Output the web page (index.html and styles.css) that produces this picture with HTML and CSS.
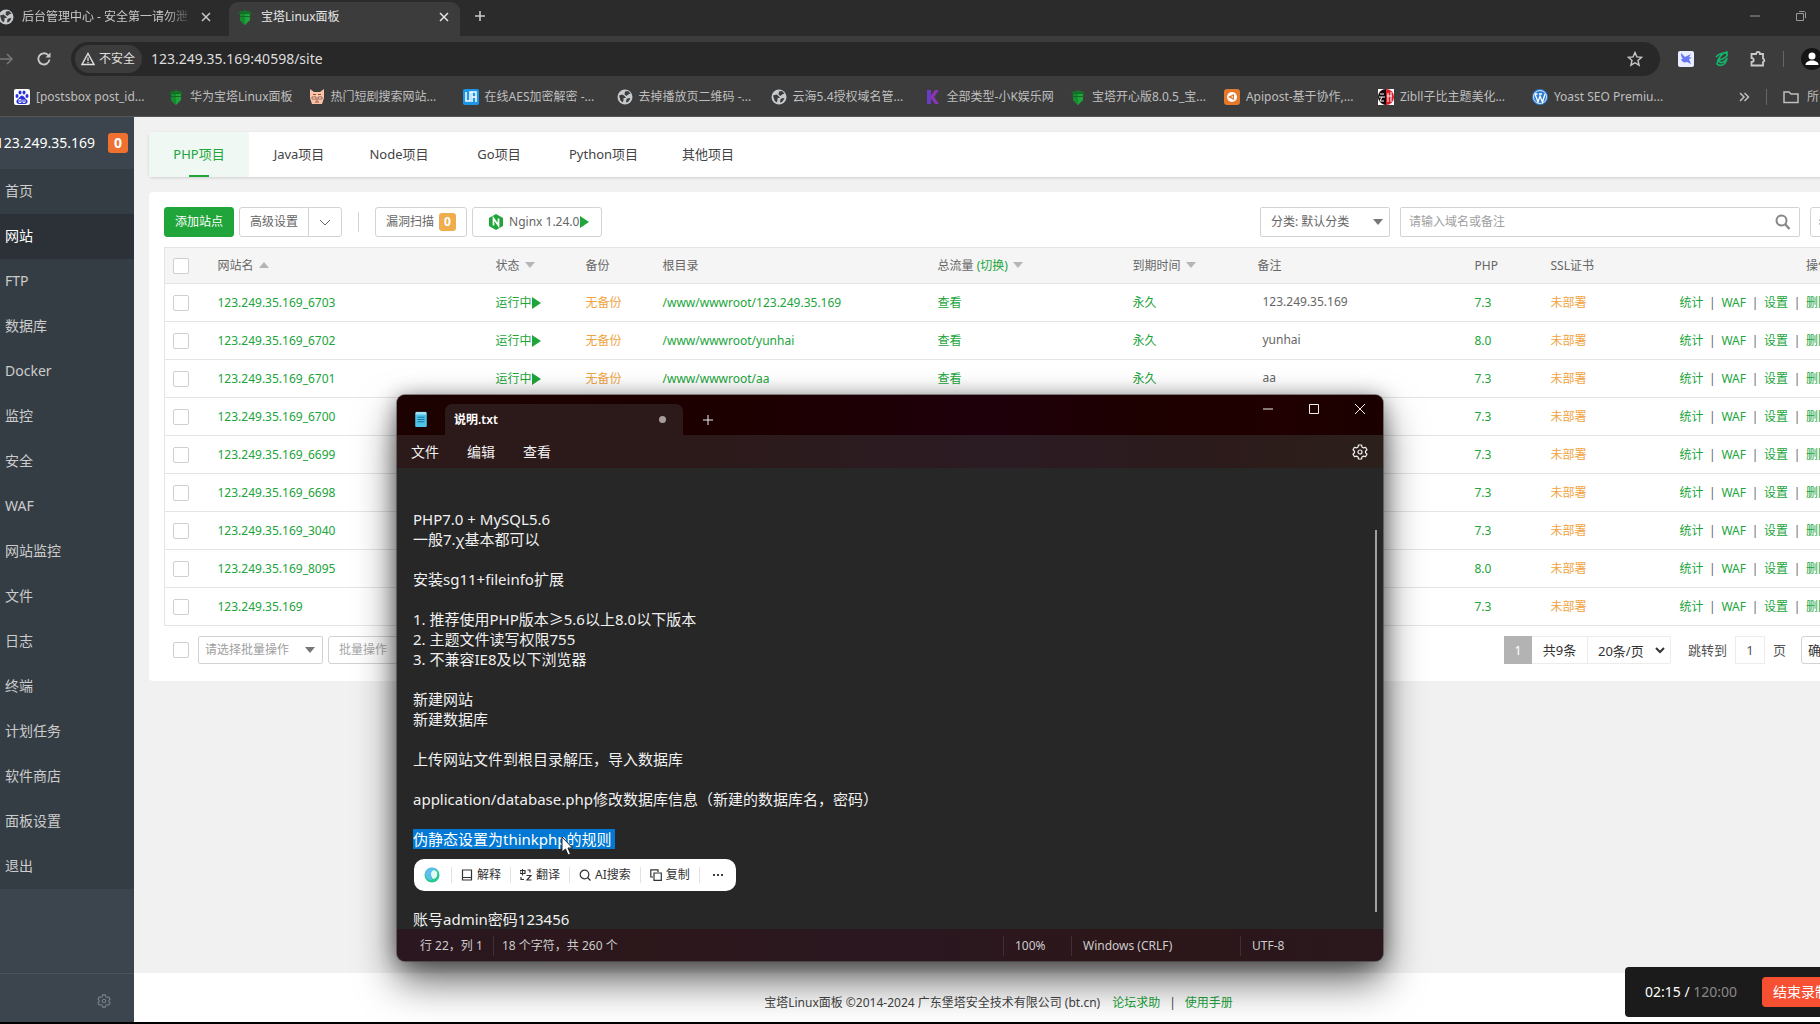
FILE: index.html
```html
<!DOCTYPE html>
<html lang="zh-CN">
<head>
<meta charset="utf-8">
<title>宝塔Linux面板</title>
<link rel="stylesheet" href="styles.css">
</head>
<body>
<svg class="defs" aria-hidden="true">
  <symbol id="globe" viewBox="0 0 16 16"><circle cx="8" cy="8" r="7.5" fill="#c6cacd"/><path d="M2 6.500l3.500-1 2 1.500 1.500 2H6.500v2.500l-1 2-2-2zM8 2.500l3-.5 2.500 2.500-2.500 1-1.500 1.500-2-1.500zM9.500 10l2.500-1 1.500.5-2.500 3.500-2 .5z" fill="#3c3c3c"/></symbol>
  <symbol id="bt" viewBox="0 0 16 16"><path d="M8 0l1 2 4 .5 1 2H2l1-2 4-.5z" fill="#14752a"/><path d="M3 5h10v6l-5 5-5-5z" fill="#20a53a"/><path d="M8 5v11l-5-5V5z" fill="#178c2e"/><path d="M1 4.500h14M2.500 7.500h11" stroke="#126b25"/></symbol>
  <symbol id="close" viewBox="0 0 12 12"><path d="M2 2l8 8M10 2l-8 8" fill="none" stroke="currentColor" stroke-width="1.500"/></symbol>
  <symbol id="down" viewBox="0 0 10 6"><path d="M0 0h10L5 6z" fill="currentColor"/></symbol>
  <symbol id="up" viewBox="0 0 10 6"><path d="M0 6h10L5 0z" fill="currentColor"/></symbol>
  <symbol id="play" viewBox="0 0 9 12"><path d="M0 0l9 6-9 6z" fill="currentColor"/></symbol>
  <symbol id="gear" viewBox="0 0 16 16"><path d="M6.500 1h3l.5 2 1.500.9 2-.6 1.500 2.600-1.500 1.400v1.400l1.500 1.400-1.500 2.600-2-.6-1.500.9-.5 2h-3L6 13l-1.500-.9-2 .6L1 10.100l1.500-1.400V7.300L1 5.900l1.500-2.600 2 .6L6 3z" fill="none" stroke="currentColor" stroke-width="1.200" stroke-linejoin="round"/><circle cx="8" cy="8" r="2" fill="none" stroke="currentColor" stroke-width="1.200"/></symbol>
</svg>

<div class="screen">
  <header class="browser">
    <div class="tabstrip">
      <div class="tab tab-first"><svg class="i16"><use href="#globe"/></svg><span class="tab-title fade">后台管理中心 - 安全第一请勿泄</span><button class="plain" aria-label="关闭"><svg class="i12"><use href="#close"/></svg></button></div>
      <div class="tab tab-active"><svg class="i16"><use href="#bt"/></svg><span class="tab-title">宝塔Linux面板</span><button class="plain" aria-label="关闭"><svg class="i12"><use href="#close"/></svg></button></div>
      <button class="plain new-tab" aria-label="新标签页"><svg class="i12" viewBox="0 0 12 12"><path d="M6 1v10M1 6h10" stroke="currentColor" stroke-width="1.600"/></svg></button>
      <div class="win-controls">
        <svg class="i12" viewBox="0 0 12 12"><path d="M1 6h10" stroke="currentColor"/></svg>
        <svg class="i12" viewBox="0 0 12 12"><path d="M1.500 3.500h7v7h-7zM4 1.500h5.500l1 1V8" fill="none" stroke="currentColor"/></svg>
        <svg class="i12"><use href="#close"/></svg>
      </div>
    </div>
    <div class="toolbar">
      <button class="plain dim" aria-label="前进"><svg class="i14" viewBox="0 0 14 14"><path d="M0 7h12M7 2l5 5-5 5" fill="none" stroke="currentColor" stroke-width="1.500"/></svg></button>
      <button class="plain reload" aria-label="刷新"><svg class="i16" viewBox="0 0 16 16"><path d="M13.500 8.500A5.600 5.600 0 1 1 12 4l1.500 1.500" fill="none" stroke="currentColor" stroke-width="1.800"/><path d="M14.500 1.500v5h-5z" fill="currentColor"/></svg></button>
      <div class="omnibox">
        <span class="chip"><svg class="i14" viewBox="0 0 14 14"><path d="M7 1.500L13 12.500H1z" fill="none" stroke="currentColor" stroke-width="1.400"/><path d="M7 5.500v3.500M7 10v1.300" stroke="currentColor" stroke-width="1.300"/></svg>不安全</span>
        <input class="url" type="text" aria-label="地址" value="123.249.35.169:40598/site">
        <svg class="i16" viewBox="0 0 16 16"><path d="M8 1.500l1.900 4.400 4.700.4-3.600 3.200 1.100 4.700L8 11.700l-4.100 2.500L5 9.500 1.400 6.300l4.700-.4z" fill="none" stroke="currentColor" stroke-width="1.400"/></svg>
      </div>
      <div class="extensions">
        <svg class="i16" viewBox="0 0 16 16"><rect width="16" height="16" rx="2" fill="#e9edff"/><path d="M3 2l4 4 6-3-2 3 3 1-3 1 2 5-4-2c-3 1-5 0-6-3l2 0C3 6 3 4 3 2z" fill="#6678f2"/></svg>
        <svg class="i16" viewBox="0 0 16 16"><path d="M2 6c3-4 10-5 11-3s-3 5-8 6M14 1C9 1 4 6 3 13c3 3 9 1 10-6M5 9c1 4 4 3 8-1" fill="none" stroke="#12b56a" stroke-width="1.700"/></svg>
        <svg class="i16" viewBox="0 0 16 16"><path d="M1.500 3h4.500a2 2 0 0 1 4 0h3v4.500a1.800 1.800 0 0 1 0 3.500v3.500H1.500V11c3 0 3-4 0-4z" fill="none" stroke="currentColor" stroke-width="1.800"/></svg>
        <i class="bar"></i>
        <svg class="i22" viewBox="0 0 22 22"><circle cx="11" cy="11" r="11" fill="#151515"/><circle cx="11" cy="8" r="3.500" fill="#fff"/><path d="M4.500 17c0-6 13-6 13 0z" fill="#fff"/></svg>
      </div>
    </div>
    <nav class="bookmarks">
      <a href="#"><svg class="i16" viewBox="0 0 16 16"><rect width="16" height="16" rx="2" fill="#fff"/><g fill="#2932d8"><ellipse cx="3" cy="7" rx="1.500" ry="2"/><ellipse cx="6" cy="3.500" rx="1.500" ry="2"/><ellipse cx="10" cy="3.500" rx="1.500" ry="2"/><ellipse cx="13" cy="7" rx="1.500" ry="2"/><path d="M8 6.500c2 0 2.500 2.500 4.500 4s1 4.500-1.500 4.500H5c-2.500 0-3.500-3-1.500-4.500s2.500-4 4.500-4z"/></g><path d="M5 10.500v3h2v-3zM9 10.500v3h2v-3" fill="none" stroke="#fff" stroke-width=".9"/></svg><span class="cut">[postsbox post_id...</span></a>
      <a href="#"><svg class="i16"><use href="#bt"/></svg><span>华为宝塔Linux面板</span></a>
      <a href="#"><svg class="i16" viewBox="0 0 16 16"><path d="M1 0l4 3h6l4-3v9l-2 6H3L1 9z" fill="#f7c6a8"/><path d="M3 8h4v2H3zM9 8h4v2H9z" fill="#fff" stroke="#8c3d2c" stroke-width=".8"/><path d="M4 5.500h3M9 5.500h3M6 13h4M7 11h2" stroke="#a8432c"/></svg><span class="cut">热门短剧搜索网站...</span></a>
      <a href="#"><svg class="i16" viewBox="0 0 16 16"><rect width="16" height="16" rx="2" fill="#1b97ea"/><path d="M3 3v9h4V3h6v10M9 3v10M9 8h4" fill="none" stroke="#fff" stroke-width="1.500"/></svg><span class="cut">在线AES加密解密 -...</span></a>
      <a href="#"><svg class="i16"><use href="#globe"/></svg><span class="cut">去掉播放页二维码 -...</span></a>
      <a href="#"><svg class="i16"><use href="#globe"/></svg><span class="cut">云海5.4授权域名管...</span></a>
      <a href="#"><svg class="i16" viewBox="0 0 16 16"><path d="M2 1h4v14H2z" fill="#6a3bc4"/><path d="M10 1h4L9 8l5 7h-4L5 8z" fill="#8b35b5"/></svg><span>全部类型-小K娱乐网</span></a>
      <a href="#"><svg class="i16"><use href="#bt"/></svg><span class="cut">宝塔开心版8.0.5_宝...</span></a>
      <a href="#"><svg class="i16" viewBox="0 0 16 16"><rect width="16" height="16" rx="3" fill="#e5782a"/><circle cx="8" cy="8" r="5" fill="#fff"/><path d="M4 8l6-3v6zM4 8h-1" fill="#e5782a"/><path d="M7 8l2-1v2z" fill="#fff"/></svg><span class="cut">Apipost-基于协作,...</span></a>
      <a href="#"><svg class="i16" viewBox="0 0 16 16"><rect width="16" height="16" fill="#fff"/><path d="M8 0a8 8 0 0 0-8 8c0 4 4 8 8 8z" fill="#17090b"/><path d="M8 0a8 8 0 0 1 0 16z" fill="#d91d2b"/><path d="M2 5h4M1 8h6M4 8l-2 4h4M10 4v9M13 3v10M9 7h5" stroke="#fff" fill="none"/></svg><span class="cut">Zibll子比主题美化...</span></a>
      <a href="#"><svg class="i16" viewBox="0 0 16 16"><circle cx="8" cy="8" r="8" fill="#2d7dd2"/><circle cx="8" cy="8" r="6.500" fill="none" stroke="#fff" stroke-width=".8"/><path d="M3 5l3 8 2-6 2.500 6L13 5M2.500 5h3M7 5h3" fill="none" stroke="#fff" stroke-width="1.300"/></svg><span class="cut">Yoast SEO Premiu...</span></a>
      <div class="more"><svg class="i12" viewBox="0 0 12 12"><path d="M2 2l4 4-4 4M6.500 2l4 4-4 4" fill="none" stroke="currentColor" stroke-width="1.500"/></svg><i class="bar"></i><svg class="i16" viewBox="0 0 16 16"><path d="M1 3h5l2 2h7v8.500H1z" fill="none" stroke="currentColor" stroke-width="1.500"/></svg><span>所有书签</span></div>
    </nav>
  </header>

  <div class="panel">
    <aside class="sidebar">
      <div class="host"><span>123.249.35.169</span><b>0</b></div>
      <nav class="menu">
        <a href="#">首页</a><a href="#" class="on">网站</a><a href="#">FTP</a><a href="#">数据库</a><a href="#">Docker</a><a href="#">监控</a><a href="#">安全</a><a href="#">WAF</a><a href="#">网站监控</a><a href="#">文件</a><a href="#">日志</a><a href="#">终端</a><a href="#">计划任务</a><a href="#">软件商店</a><a href="#">面板设置</a><a href="#">退出</a>
      </nav>
      <div class="side-foot"><svg class="i14"><use href="#gear"/></svg></div>
    </aside>

    <main class="main">
      <nav class="project-tabs"><a href="#" class="on">PHP项目</a><a href="#">Java项目</a><a href="#">Node项目</a><a href="#">Go项目</a><a href="#">Python项目</a><a href="#">其他项目</a></nav>

      <section class="card">
        <div class="actions">
          <button class="btn primary">添加站点</button>
          <div class="split"><button class="btn">高级设置</button><button class="btn" aria-label="更多"><svg class="i12" viewBox="0 0 12 12"><path d="M1 4l5 5 5-5" fill="none" stroke="currentColor"/></svg></button></div>
          <i class="divider"></i>
          <button class="btn">漏洞扫描<b class="count">0</b></button>
          <button class="btn nginx"><svg class="i16" viewBox="0 0 16 16"><path d="M8 0l7 4v8l-7 4-7-4V4z" fill="#20a53a"/><path d="M5.500 11.500v-7l5 7v-7" fill="none" stroke="#fff" stroke-width="1.700"/></svg><span>Nginx 1.24.0</span><svg class="play"><use href="#play"/></svg></button>
          <div class="filters">
            <label class="pick category"><select aria-label="分类"><option>分类: 默认分类</option></select><svg><use href="#down"/></svg></label>
            <label class="search"><input type="text" placeholder="请输入域名或备注" aria-label="搜索"><svg class="i16" viewBox="0 0 16 16"><circle cx="6.500" cy="6.500" r="5" fill="none" stroke="currentColor" stroke-width="2"/><path d="M10 10l4.500 5" stroke="currentColor" stroke-width="2.400"/></svg></label>
            <button class="btn cog" aria-label="设置"><svg class="i14"><use href="#gear"/></svg></button>
          </div>
        </div>

        <table class="sites">
          <colgroup><col class="c-check"><col class="c-name"><col class="c-state"><col class="c-backup"><col class="c-root"><col class="c-flow"><col class="c-expiry"><col class="c-note"><col class="c-php"><col><col class="c-ops"></colgroup>
          <thead><tr><th><input type="checkbox" aria-label="全选"></th><th>网站名 <svg class="sort"><use href="#up"/></svg></th><th>状态 <svg class="sort"><use href="#down"/></svg></th><th>备份</th><th>根目录</th><th>总流量 <a href="#">(切换)</a> <svg class="sort"><use href="#down"/></svg></th><th>到期时间 <svg class="sort"><use href="#down"/></svg></th><th>备注</th><th>PHP</th><th>SSL证书</th><th class="ops">操作</th></tr></thead>
          <tbody>
            <tr><td><input type="checkbox" aria-label="选择"></td><td><a href="#">123.249.35.169_6703</a></td><td><a href="#">运行中<svg class="play"><use href="#play"/></svg></a></td><td><a href="#" class="warn">无备份</a></td><td><a href="#">/www/wwwroot/123.249.35.169</a></td><td><a href="#">查看</a></td><td><a href="#">永久</a></td><td class="note">123.249.35.169</td><td><a href="#">7.3</a></td><td><a href="#" class="warn">未部署</a></td><td class="ops"><a href="#">统计</a><i>|</i><a href="#">WAF</a><i>|</i><a href="#">设置</a><i>|</i><a href="#">删除</a></td></tr>
            <tr><td><input type="checkbox" aria-label="选择"></td><td><a href="#">123.249.35.169_6702</a></td><td><a href="#">运行中<svg class="play"><use href="#play"/></svg></a></td><td><a href="#" class="warn">无备份</a></td><td><a href="#">/www/wwwroot/yunhai</a></td><td><a href="#">查看</a></td><td><a href="#">永久</a></td><td class="note">yunhai</td><td><a href="#">8.0</a></td><td><a href="#" class="warn">未部署</a></td><td class="ops"><a href="#">统计</a><i>|</i><a href="#">WAF</a><i>|</i><a href="#">设置</a><i>|</i><a href="#">删除</a></td></tr>
            <tr><td><input type="checkbox" aria-label="选择"></td><td><a href="#">123.249.35.169_6701</a></td><td><a href="#">运行中<svg class="play"><use href="#play"/></svg></a></td><td><a href="#" class="warn">无备份</a></td><td><a href="#">/www/wwwroot/aa</a></td><td><a href="#">查看</a></td><td><a href="#">永久</a></td><td class="note">aa</td><td><a href="#">7.3</a></td><td><a href="#" class="warn">未部署</a></td><td class="ops"><a href="#">统计</a><i>|</i><a href="#">WAF</a><i>|</i><a href="#">设置</a><i>|</i><a href="#">删除</a></td></tr>
            <tr><td><input type="checkbox" aria-label="选择"></td><td><a href="#">123.249.35.169_6700</a></td><td></td><td></td><td></td><td></td><td></td><td></td><td><a href="#">7.3</a></td><td><a href="#" class="warn">未部署</a></td><td class="ops"><a href="#">统计</a><i>|</i><a href="#">WAF</a><i>|</i><a href="#">设置</a><i>|</i><a href="#">删除</a></td></tr>
            <tr><td><input type="checkbox" aria-label="选择"></td><td><a href="#">123.249.35.169_6699</a></td><td></td><td></td><td></td><td></td><td></td><td></td><td><a href="#">7.3</a></td><td><a href="#" class="warn">未部署</a></td><td class="ops"><a href="#">统计</a><i>|</i><a href="#">WAF</a><i>|</i><a href="#">设置</a><i>|</i><a href="#">删除</a></td></tr>
            <tr><td><input type="checkbox" aria-label="选择"></td><td><a href="#">123.249.35.169_6698</a></td><td></td><td></td><td></td><td></td><td></td><td></td><td><a href="#">7.3</a></td><td><a href="#" class="warn">未部署</a></td><td class="ops"><a href="#">统计</a><i>|</i><a href="#">WAF</a><i>|</i><a href="#">设置</a><i>|</i><a href="#">删除</a></td></tr>
            <tr><td><input type="checkbox" aria-label="选择"></td><td><a href="#">123.249.35.169_3040</a></td><td></td><td></td><td></td><td></td><td></td><td></td><td><a href="#">7.3</a></td><td><a href="#" class="warn">未部署</a></td><td class="ops"><a href="#">统计</a><i>|</i><a href="#">WAF</a><i>|</i><a href="#">设置</a><i>|</i><a href="#">删除</a></td></tr>
            <tr><td><input type="checkbox" aria-label="选择"></td><td><a href="#">123.249.35.169_8095</a></td><td></td><td></td><td></td><td></td><td></td><td></td><td><a href="#">8.0</a></td><td><a href="#" class="warn">未部署</a></td><td class="ops"><a href="#">统计</a><i>|</i><a href="#">WAF</a><i>|</i><a href="#">设置</a><i>|</i><a href="#">删除</a></td></tr>
            <tr><td><input type="checkbox" aria-label="选择"></td><td><a href="#">123.249.35.169</a></td><td></td><td></td><td></td><td></td><td></td><td></td><td><a href="#">7.3</a></td><td><a href="#" class="warn">未部署</a></td><td class="ops"><a href="#">统计</a><i>|</i><a href="#">WAF</a><i>|</i><a href="#">设置</a><i>|</i><a href="#">删除</a></td></tr>
          </tbody>
        </table>

        <div class="table-foot">
          <input type="checkbox" aria-label="全选">
          <label class="pick batch"><select aria-label="批量操作"><option>请选择批量操作</option></select><svg><use href="#down"/></svg></label>
          <button class="btn batch-btn" disabled>批量操作</button>
          <div class="pager">
            <span class="page">1</span><span class="total">共9条</span>
            <label class="pick size"><select aria-label="每页条数"><option>20条/页</option></select><svg class="i10" viewBox="0 0 10 10"><path d="M1 3l4 4 4-4" fill="none" stroke="currentColor" stroke-width="2"/></svg></label>
            <label class="jump">跳转到<input type="text" value="1">页</label>
            <button class="btn confirm">确定</button>
          </div>
        </div>
      </section>

      <footer class="footer"><span>宝塔Linux面板 ©2014-2024 广东堡塔安全技术有限公司 (bt.cn)</span><a href="#">论坛求助</a><i>|</i><a href="#">使用手册</a></footer>
    </main>
  </div>
</div>

<section class="notepad" aria-label="记事本">
  <div class="np-title">
    <svg class="i16" viewBox="0 0 16 18"><rect x="1.500" y="2" width="13" height="16" rx="1" fill="#4fc3e8"/><path d="M2 1h12v3H2z" fill="#9be3f5"/><path d="M4 7h8M4 9.500h8M4 12h8" stroke="#17739b" stroke-width="1.200"/></svg>
    <div class="np-tab"><span>说明.txt</span><i></i></div>
    <button class="plain np-new" aria-label="新建标签"><svg class="i12" viewBox="0 0 12 12"><path d="M6 1v10M1 6h10" stroke="currentColor"/></svg></button>
    <div class="np-controls">
      <svg class="i12" viewBox="0 0 12 12"><path d="M1 6h10" stroke="currentColor"/></svg>
      <svg class="i12" viewBox="0 0 12 12"><path d="M1.500 1.500h9v9h-9z" fill="none" stroke="currentColor"/></svg>
      <svg class="i12" viewBox="0 0 12 12"><path d="M1 1l10 10M11 1L1 11" stroke="currentColor"/></svg>
    </div>
  </div>
  <div class="np-menu"><button class="plain">文件</button><button class="plain">编辑</button><button class="plain">查看</button><svg class="i16"><use href="#gear"/></svg></div>
  <div class="np-body">
<div class="np-text">PHP7.0 + MySQL5.6
一般7.χ基本都可以

安装sg11+fileinfo扩展

1. 推荐使用PHP版本≥5.6以上8.0以下版本
2. 主题文件读写权限755
3. 不兼容IE8及以下浏览器

新建网站
新建数据库

上传网站文件到根目录解压，导入数据库

application/database.php修改数据库信息（新建的数据库名，密码）

<mark>伪静态设置为thinkphp的规则 </mark>



账号admin密码123456</div>
    <i class="np-scroll"></i>
    <div class="assist">
      <svg class="i16" viewBox="0 0 16 16"><circle cx="8" cy="8" r="7.500" fill="#27c796"/><path d="M3 2.500C5 0 12 0 13.500 3c-3-1-5 0-6 3s-1 5 1 7C3 14-1 8 3 2.500z" fill="#5fbdf0"/><path d="M7 7c0-4 4-5 6-2 1 4-1 7-4 7-1-1-2-3-2-5z" fill="#e2fbf0"/></svg>
      <button class="plain"><svg class="i12" viewBox="0 0 12 12"><path d="M1.500 1h9v10h-9zM1.500 8.500h9" fill="none" stroke="currentColor" stroke-width="1.200"/></svg>解释</button>
      <button class="plain"><svg class="i12" viewBox="0 0 12 12"><path d="M0 1.500h5v3H0zM2.500 0v6.500M7.500 1h2.500v2.500M1 8v2.500h3M6.500 6.500H11L7 11h4.500" fill="none" stroke="currentColor" stroke-width="1.200"/></svg>翻译</button>
      <button class="plain"><svg class="i12" viewBox="0 0 12 12"><circle cx="5.500" cy="5.500" r="4.300" fill="none" stroke="currentColor" stroke-width="1.200"/><path d="M8.500 8.500l3 3" stroke="currentColor" stroke-width="1.200"/></svg>AI搜索</button>
      <button class="plain"><svg class="i12" viewBox="0 0 12 12"><path d="M3 8H.8V.8H8V3M4 4h7.300v7.300H4z" fill="none" stroke="currentColor" stroke-width="1.200"/></svg>复制</button>
      <button class="plain" aria-label="更多"><svg class="i12" viewBox="0 0 12 12"><circle cx="2" cy="6" r="1"/><circle cx="6" cy="6" r="1"/><circle cx="10" cy="6" r="1"/></svg></button>
    </div>
    <svg class="cursor" viewBox="0 0 12 20"><path d="M1 1v15l3.500-3 2.500 6 2.500-1L7 12h4.500z" fill="#fff" stroke="#222" stroke-width="1"/></svg>
  </div>
  <div class="np-status"><span class="st-pos">行 22，列 1</span><span class="st-chars">18 个字符，共 260 个</span><span class="st-zoom">100%</span><span class="st-eol">Windows (CRLF)</span><span class="st-enc">UTF-8</span></div>
</section>

<div class="recorder"><span>02:15 / <em>120:00</em></span><button>结束录制</button></div>
</body>
</html>
```

FILE: styles.css
```css
* { box-sizing: border-box; }
body { margin: 0; position: relative; overflow: hidden; background: #000; font: 12px/20px "Noto Sans", "Noto Sans CJK SC", sans-serif; color: #666; }
a { color: inherit; text-decoration: none; }
i, em { font-style: normal; }
button, input, select { font: inherit; color: inherit; }
svg { flex: none; display: block; }
.defs { position: absolute; width: 0; height: 0; }
.plain { display: flex; align-items: center; padding: 0; border: 0; background: none; }
.i10 { width: 10px; height: 10px; }
.i12 { width: 12px; height: 12px; }
.i14 { width: 14px; height: 14px; }
.i16 { width: 16px; height: 16px; }
.i22 { width: 22px; height: 22px; }

/* The maximised window reaches past the right edge of the screen */
.screen { display: flex; flex-direction: column; min-height: 100vh; margin-right: -51px; border-bottom: 2px solid #000; }

/* Browser chrome */
.browser { background: #3c3c3c; color: #c9c9c9; border-bottom: 1px solid #565656; }
.tabstrip { display: flex; height: 36px; background: #2b2b2b; }
.tab { display: flex; align-items: center; gap: 8px; }
.tab-title { flex: 1; overflow: hidden; white-space: nowrap; }
.tab-first { width: 231px; padding: 0 17px 2px 0; margin-left: -2px; }
.fade { mask-image: linear-gradient(90deg, #000 85%, transparent); }
.tab-active { width: 231px; margin-top: 2px; padding: 0 10px 4px 8px; background: #3c3c3c; border-radius: 9px 9px 0 0; color: #e6e6e6; }
.new-tab { margin: 0 0 4px 14px; }
.win-controls { display: flex; align-items: center; gap: 34px; margin-left: auto; padding: 0 18px 4px 0; color: #999; }
.toolbar { display: flex; align-items: center; height: 46px; }
.dim { color: #777; }
.reload { margin: 0 19px 0 22px; }
.omnibox { flex: 1; display: flex; align-items: center; height: 34px; padding: 0 17px 0 4px; border-radius: 17px; background: #282828; }
.chip { display: flex; align-items: center; gap: 4px; height: 28px; padding: 0 7px 0 6px; border-radius: 14px; background: #3c3c3c; color: #e0e0e0; }
.url { flex: 1; min-width: 0; margin-left: 9px; padding: 0; border: 0; background: none; font-size: 14px; color: #ddd; }
.extensions { display: flex; align-items: center; gap: 20px; margin: 0 48px 0 18px; }
.bar { width: 1px; height: 16px; background: #666; }
.extensions .bar { margin: 0 -3px; }
.bookmarks { display: flex; align-items: center; gap: 16px; height: 34px; padding: 0 0 4px 14px; white-space: nowrap; color: #bfbfbf; }
.bookmarks a { display: flex; align-items: center; gap: 6px; }
.cut { width: 116px; }
.more { display: flex; align-items: center; gap: 16px; margin: 0 16px 0 auto; }
.more span { margin-left: -8px; }

/* Panel */
.panel { flex: 1; display: flex; }
.sidebar { width: 134px; display: flex; flex-direction: column; background: #3c444d; color: #ccc; font-size: 14px; }
.host { display: flex; align-items: center; justify-content: flex-end; gap: 13px; height: 52px; padding-right: 6px; color: #fff; }
.host span, .host b { flex: none; }
.host b { width: 20px; border-radius: 3px; background: #f0702f; text-align: center; }
.menu { background: #353d44; }
.menu a { display: block; padding-left: 5px; height: 45px; line-height: 44px; }
.menu .on { background: #2c3138; color: #fff; }
.side-foot { display: flex; align-items: center; justify-content: flex-end; height: 49px; margin-top: auto; padding: 6px 23px 0 0; border-top: 1px solid #4a525a; color: #7b838a; }
.main { flex: 1; min-width: 0; display: flex; flex-direction: column; background: #f1f1f1; }
.project-tabs { display: flex; margin: 15px 15px 0; background: #fff; border-radius: 4px; box-shadow: 0 1px 3px rgba(0,0,0,.14); font-size: 13px; color: #444; }
.project-tabs a { min-width: 100px; padding: 0 20px; text-align: center; line-height: 45px; height: 45px; display: flex; flex-direction: column; align-items: center; }
.project-tabs .on { background: #eff8f2; color: #20a53a; }
.project-tabs .on::after { content: ""; width: 20px; height: 2px; margin-top: -2px; background: #20a53a; }
.card { margin: 15px 15px 0; padding: 15px 15px 17px; background: #fff; border-radius: 4px; }
.actions { display: flex; align-items: center; gap: 5px; margin-bottom: 10px; }
.btn { display: flex; align-items: center; justify-content: center; height: 30px; padding: 0 10px; border: 1px solid #d3d3d3; border-radius: 3px; background: #fff; white-space: nowrap; }
.primary { background: #20a53a; border-color: #20a53a; color: #fff; }
.split { display: flex; }
.split .btn:first-child { border-radius: 3px 0 0 3px; }
.split .btn:last-child { margin-left: -1px; border-radius: 0 3px 3px 0; }
.divider { width: 1px; height: 20px; margin: 0 11px; background: #d3d3d3; }
.count { width: 17px; height: 18px; line-height: 18px; margin-left: 5px; border-radius: 3px; background: #f0ad4e; color: #fff; }
.nginx { padding: 0 12px 0 15px; }
.nginx span { margin: 0 1px 0 5px; }
.play { display: inline-block; width: 9px; height: 12px; color: #20a53a; vertical-align: -2px; }
.filters { display: flex; gap: 10px; margin-left: auto; }
.pick { display: flex; align-items: center; border: 1px solid #d3d3d3; border-radius: 2px; background: #fff; }
.pick select { flex: 1; min-width: 0; height: 100%; padding: 0; border: 0; background: none; appearance: none; }
.pick > svg:not(.i10) { width: 10px; height: 6px; color: #777; }
.category { width: 130px; height: 30px; padding: 0 6px 0 10px; }
.search { display: flex; align-items: center; width: 400px; height: 30px; padding: 0 8px; border: 1px solid #d3d3d3; border-radius: 2px; color: #888; }
.search input { flex: 1; min-width: 0; border: 0; padding: 0; background: none; }
.search input::placeholder { color: #a0a0a0; }
.cog { width: 31px; padding: 0; }

.sites { width: 100%; table-layout: fixed; border-collapse: collapse; border: 1px solid #e4e4e4; }
.sites th, .sites td { height: 38px; padding: 0 8px; border-bottom: 1px solid #e4e4e4; text-align: left; font-weight: 400; white-space: nowrap; }
.sites th { height: 36px; background: #f5f5f5; }
.sites a { color: #20a53a; }
.sites .warn { color: #f0a340; }
.sites .ops { padding-right: 10px; text-align: right; }
.sites .ops i { display: inline-block; width: 18px; text-align: center; }
.sites td.note { padding: 0 0 2px 13px; }
.c-check { width: 45px; } .c-name { width: 278px; } .c-state { width: 90px; } .c-backup { width: 77px; } .c-root { width: 275px; } .c-flow { width: 195px; } .c-expiry { width: 125px; } .c-note { width: 217px; } .c-php { width: 76px; } .c-ops { width: 190px; }
.sort { display: inline-block; width: 10px; height: 6px; margin-left: 2px; color: #b5b5b5; vertical-align: 2px; }
input[type=checkbox] { appearance: none; display: block; flex: none; width: 16px; height: 16px; margin: 0; border: 1px solid #cfcfcf; border-radius: 2px; background: #fff; }
.table-foot { display: flex; align-items: center; gap: 5px; padding: 10px 0 0 9px; color: #a0a0a0; }
.batch { width: 125px; height: 28px; margin-left: 4px; padding: 0 7px 0 6px; }
.batch-btn { height: 28px; color: #a8a8a8; }
.pager { display: flex; margin-left: auto; font-size: 13px; line-height: 28px; color: #555; }
.page { width: 28px; background: #b3b3b3; color: #fff; text-align: center; }
.total { width: 56px; border: 1px solid #ececec; border-left: 0; line-height: 26px; text-align: center; color: #333; }
.size { width: 84px; height: 28px; margin-left: -1px; padding: 0 5px 0 10px; border-color: #ececec; color: #333; }
.jump { display: flex; margin-left: 17px; }
.jump input { width: 30px; height: 28px; margin: 0 8px; padding: 0; border: 1px solid #ececec; text-align: center; }
.confirm { height: 28px; margin-left: 15px; padding: 0 6px; color: #333; }
.footer { display: flex; align-items: center; justify-content: center; height: 49px; margin-top: auto; padding: 10px 8px 0 0; background: #fff; color: #444; }
.footer i { margin: 0 9px; }
.footer a { color: #20a53a; }
.footer span { margin-right: 12px; }

/* Notepad window floating over the page */
.notepad { position: absolute; left: 397px; top: 395px; width: 986px; height: 566px; display: flex; flex-direction: column; border-radius: 8px; background: #272727; color: #f0f0f0; box-shadow: 0 0 0 1px rgba(60,50,50,.5), 0 2px 20px rgba(0,0,0,.4), 0 20px 40px rgba(0,0,0,.6); }
.np-title { display: flex; height: 40px; padding-left: 16px; border-radius: 8px 8px 0 0; background: linear-gradient(90deg, #1d0202, #1c0000 35%, #1e000b 60%, #1d0000 75%, #200000 90%, #1a0000); }
.np-title > svg { align-self: center; margin-top: 8px; }
.np-tab { display: flex; align-items: center; justify-content: space-between; width: 238px; margin: 9px 0 0 16px; padding: 0 17px 0 9px; border-radius: 7px 7px 0 0; background: #2c1a1a; color: #fff; font-weight: 600; }
.np-tab i { width: 7px; height: 7px; border-radius: 50%; background: #a89d9d; }
.np-new { margin: 10px 0 0 19px; }
.np-controls { display: flex; gap: 34px; margin: 8px 17px 0 auto; }
.np-menu { display: flex; align-items: center; gap: 28px; height: 33px; padding: 0 15px 0 14px; background: linear-gradient(90deg, #2c1a1a 30%, #2b1b23 62%, #2c1b1a 85%, #2c201c); font-size: 14px; }
.np-menu svg { margin-left: auto; }
.np-body { position: relative; flex: 1; min-height: 0; padding: 41px 16px 0; overflow: hidden; }
.np-text { white-space: pre; font-size: 15px; line-height: 20px; }
.np-text mark { display: inline-block; background: #0078d4; color: #fff; }
.np-scroll { position: absolute; right: 6px; top: 62px; width: 2px; height: 382px; background: #a0a0a0; }
.assist { position: absolute; left: 17px; top: 391px; display: flex; align-items: center; height: 32px; padding-left: 10px; border-radius: 10px; background: #fff; color: #333; }
.assist > svg { margin-right: 11px; }
.assist .plain { height: 16px; gap: 4px; padding: 0 9px; border-left: 1px solid #e3e3e3; }
.assist .plain:last-child { padding: 0 12px; }
.cursor { position: absolute; left: 164px; top: 368px; width: 12px; height: 20px; }
.np-status { display: flex; align-items: center; height: 32px; padding-top: 2px; border-radius: 0 0 8px 8px; background: linear-gradient(90deg, #2a1720, #2c171b 25%, #2a1720 50%, #2c1619 75%, #2a181d); color: #ccc; white-space: nowrap; }
.np-status span + span { padding-left: 11px; border-left: 1px solid #403035; }
.st-pos { width: 96px; padding-left: 23px; }
.np-status .st-chars { flex: 1; padding-left: 8px; }
.st-zoom { width: 68px; }
.st-eol { width: 169px; }
.st-enc { width: 143px; }

.recorder { position: absolute; right: -51px; bottom: 7px; display: flex; align-items: center; justify-content: space-between; width: 246px; height: 50px; padding: 0 31px 0 20px; border-radius: 4px; background: #1b1b1b; color: #fff; font-size: 14px; }
.recorder em { color: #888; }
.recorder button { height: 30px; padding: 0 11px; border: 0; border-radius: 4px; background: #f64f32; }
```
